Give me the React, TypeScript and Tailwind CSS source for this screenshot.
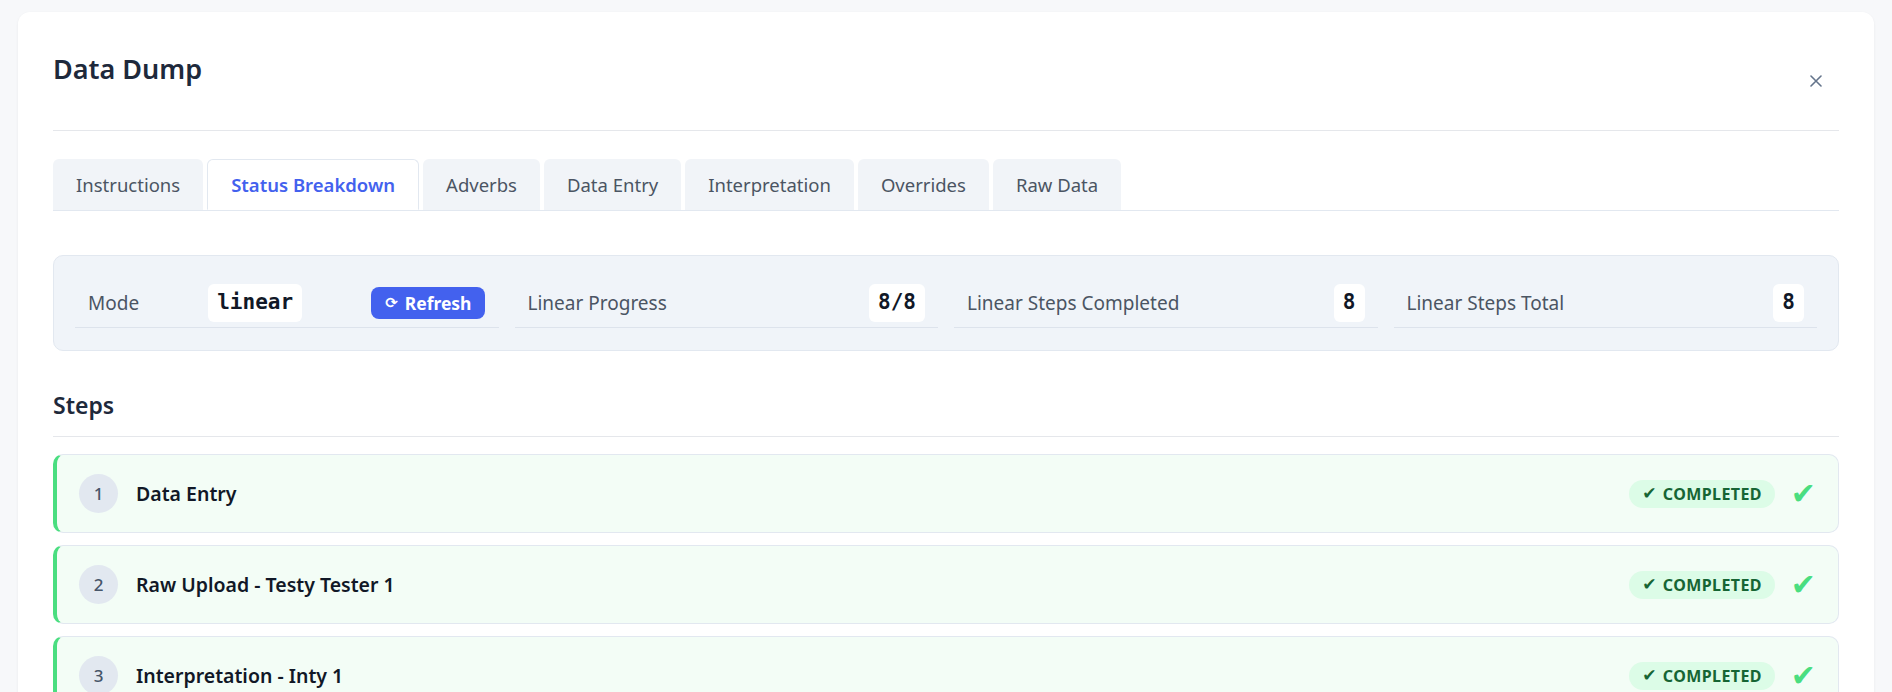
import { useState } from "react";

type Step = {
  id: number;
  name: string;
  status: "completed" | "pending";
};

const tabs = [
  "Instructions",
  "Status Breakdown",
  "Adverbs",
  "Data Entry",
  "Interpretation",
  "Overrides",
  "Raw Data",
];

const steps: Step[] = [
  { id: 1, name: "Data Entry", status: "completed" },
  { id: 2, name: "Raw Upload - Testy Tester 1", status: "completed" },
  { id: 3, name: "Interpretation - Inty 1", status: "completed" },
];

function CloseIcon() {
  return (
    <svg width="12" height="12" viewBox="0 0 12 12" fill="none">
      <path d="M1 1L11 11M11 1L1 11" stroke="#64748b" strokeWidth="1.6" strokeLinecap="round" />
    </svg>
  );
}

function StatCell({ label, children }: { label: string; children: React.ReactNode }) {
  return (
    <div className="flex items-center justify-between px-[13px] pt-[6px] pb-[5px] border-b border-[#dde3ec]">
      <span className="text-[19px] text-[#4b5563]">{label}</span>
      {children}
    </div>
  );
}

function Value({ text }: { text: string }) {
  return (
    <span className="h-[38px] px-[9px] flex items-center rounded-md bg-white font-['DejaVu_Sans_Mono',monospace] font-bold text-[21px] text-[#111827]">
      {text}
    </span>
  );
}

export default function App() {
  const [activeTab, setActiveTab] = useState("Status Breakdown");

  return (
    <div className="h-screen overflow-hidden bg-[#f7f8fa] px-[18px] pt-[12px] font-['Noto_Sans','DejaVu_Sans',sans-serif]">
      <div className="rounded-xl bg-white shadow-[0_1px_3px_rgba(15,23,42,0.06)] px-[35px] pb-10">
        {/* Header */}
        <div className="flex items-start justify-between pt-[39px] pb-[37px] border-b border-[#e5e7eb]">
          <h2 className="text-[27px] leading-[36px] font-semibold text-[#1e293b]">Data Dump</h2>
          <button className="mt-[18px] mr-[11px] w-[24px] h-[24px] flex items-center justify-center">
            <CloseIcon />
          </button>
        </div>

        {/* Tabs */}
        <div className="mt-[28px] flex gap-[4px] border-b border-[#e2e8f0]">
          {tabs.map((t) => {
            const isActive = t === activeTab;
            return (
              <button
                key={t}
                onClick={() => setActiveTab(t)}
                className={`h-[51px] px-[23px] rounded-t-md text-[18.5px] ${
                  isActive
                    ? "bg-white border border-[#e2e8f0] border-b-white -mb-px font-semibold text-[#4361ee]"
                    : "bg-[#f1f4f8] text-[#4b5563]"
                }`}
              >
                {t}
              </button>
            );
          })}
        </div>

        {/* Status summary */}
        <div className="mt-[44px] rounded-[10px] border border-[#e2e8f0] bg-[#f0f4f9] px-[21px] py-[22px] grid grid-cols-4 gap-x-4">
          <StatCell label="Mode">
            <Value text="linear" />
            <button className="h-[32px] px-[14px] rounded-lg bg-[#4361ee] text-white text-[17.5px] font-bold flex items-center gap-[7px]">
              <span className="text-[15px] font-['DejaVu_Sans',sans-serif]">⟳</span>
              Refresh
            </button>
          </StatCell>
          <StatCell label="Linear Progress">
            <Value text="8/8" />
          </StatCell>
          <StatCell label="Linear Steps Completed">
            <Value text="8" />
          </StatCell>
          <StatCell label="Linear Steps Total">
            <Value text="8" />
          </StatCell>
        </div>

        {/* Steps */}
        <h3 className="mt-[38px] pb-[15px] text-[23px] leading-[32px] font-semibold text-[#1e293b] border-b border-[#e5e7eb]">
          Steps
        </h3>
        <div className="mt-[17px] flex flex-col gap-[12px]">
          {steps.map((s) => (
            <div
              key={s.id}
              className="h-[79px] flex items-center rounded-[10px] border border-[#e2e8f0] border-l-4 border-l-[#4ade80] bg-[#f3fdf6] pl-[22px] pr-[22px]"
            >
              <span className="w-[39px] h-[39px] rounded-full bg-[#e2e8f0] flex items-center justify-center text-[17px] font-medium text-[#475569]">
                {s.id}
              </span>
              <span className="ml-[18px] text-[19.5px] font-semibold text-[#111827]">{s.name}</span>
              <span className="ml-auto h-[28px] px-[13px] rounded-full bg-[#dcfce7] text-[#166534] text-[16px] font-bold tracking-wide flex items-center gap-[6px]">
                <span className="text-[17px] font-['DejaVu_Sans',sans-serif]">✔</span>
                COMPLETED
              </span>
              <span className="ml-[16px] text-[30px] leading-none text-[#4ade80] font-['DejaVu_Sans',sans-serif]">✔</span>
            </div>
          ))}
        </div>
      </div>
    </div>
  );
}
